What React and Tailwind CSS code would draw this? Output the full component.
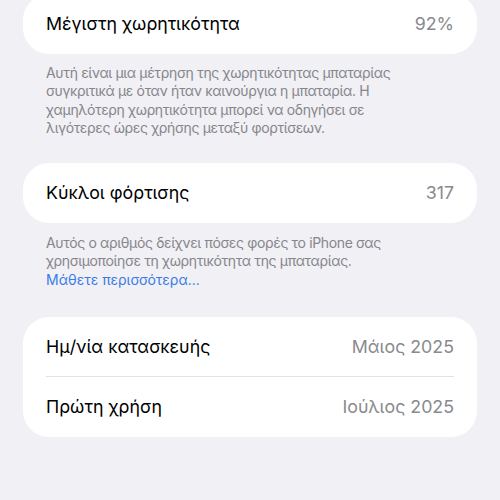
import React from "react";

const Row = ({ label, value, divider = false }) => {
  return (
    <div className="relative flex h-[60px] items-center justify-between px-[23px]">
      <span className="text-[17.8px] text-black">{label}</span>
      <span className="text-[17.8px] text-[#8a8a8e]">{value}</span>
      {divider && (
        <div className="absolute bottom-0 left-[23px] right-[23px] h-px bg-[#e3e3e6]"></div>
      )}
    </div>
  );
};

const Note = ({ children, className = "" }) => {
  return (
    <div
      className={`px-[23px] text-[14px] leading-[18.3px] tracking-[-0.35px] text-[#86868b] ${className}`}
    >
      {children}
    </div>
  );
};

export default function App() {
  return (
    <div
      className="h-[500px] w-[500px] overflow-hidden bg-[#f0f0f5] px-[23px]"
      style={{ fontFamily: "Inter, 'Noto Sans', sans-serif" }}
    >
      <div className="mt-[-6px] rounded-[26px] bg-white">
        <Row label="Μέγιστη χωρητικότητα" value="92%" />
      </div>
      <Note className="pt-[10px]">
        Αυτή είναι μια μέτρηση της χωρητικότητας μπαταρίας
        <br />
        συγκριτικά με όταν ήταν καινούργια η μπαταρία. Η
        <br />
        χαμηλότερη χωρητικότητα μπορεί να οδηγήσει σε
        <br />
        λιγότερες ώρες χρήσης μεταξύ φορτίσεων.
      </Note>

      <div className="mt-[26px] rounded-[26px] bg-white">
        <Row label="Κύκλοι φόρτισης" value="317" />
      </div>
      <Note className="pt-[11px]">
        Αυτός ο αριθμός δείχνει πόσες φορές το iPhone σας
        <br />
        χρησιμοποίησε τη χωρητικότητα της μπαταρίας.
        <br />
        <span className="tracking-normal text-[#3a7be8]">Μάθετε περισσότερα...</span>
      </Note>

      <div className="mt-[28px] rounded-[26px] bg-white">
        <Row label="Ημ/νία κατασκευής" value="Μάιος 2025" divider />
        <Row label="Πρώτη χρήση" value="Ιούλιος 2025" />
      </div>
    </div>
  );
}
